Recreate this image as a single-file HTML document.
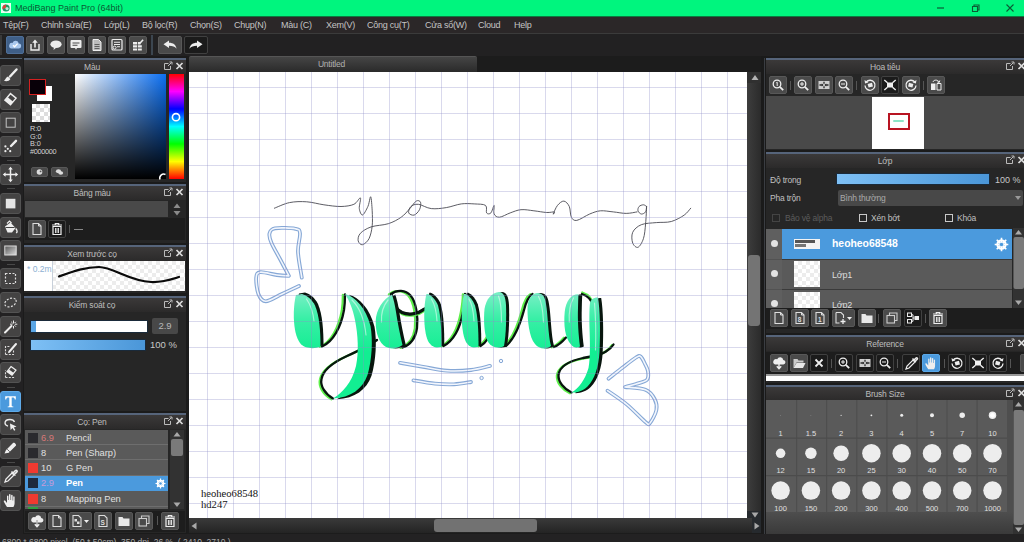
<!DOCTYPE html>
<html>
<head>
<meta charset="utf-8">
<title>MediBang Paint Pro</title>
<style>
*{box-sizing:border-box;margin:0;padding:0}
html,body{width:1024px;height:542px;overflow:hidden;background:#232323;font-family:"Liberation Sans",sans-serif;}
#app{position:relative;width:1024px;height:542px;overflow:hidden;background:#232323;}
.a{position:absolute}
#title{left:0;top:0;width:1024px;height:17px;background:#00f57e;border-bottom:1px solid #0a7a40}
#title .t{position:absolute;left:15px;top:3px;font-size:9px;line-height:10px;color:#0b5a34;white-space:nowrap}
#menu{left:0;top:17px;width:1024px;height:17px;background:#2b2728;border-bottom:1px solid #3b3b3b}
#menu span{position:absolute;top:3px;font-size:9px;line-height:10px;color:#c4c4c4;white-space:nowrap;letter-spacing:-0.25px}
#tbar{left:0;top:34px;width:1024px;height:22px;background:#222122}
.b{position:absolute;width:18px;height:18px;background:#4a4a4a;border-radius:2px;border:1px solid #585858}
.b.dk{background:#1b1b1b;border-color:#404040}
.b.bl{background:#4b9add;border-color:#5aa8e8}
.b svg{position:absolute;left:0;top:0;width:16px;height:16px}
.hdr{position:absolute;height:16px;background:linear-gradient(#3b3939,#2b2a2a);border-top:2px solid #56647a;color:#bdbdbd;font-size:8.5px;text-align:center;line-height:15px;letter-spacing:-0.2px}
.hdr i{position:absolute;top:3px;width:8px;height:8px}
.sep{position:absolute;width:1px;background:#4a4a4a}
.tool{position:absolute;left:0;width:21px;height:21px;background:#444343;border-radius:3px;border:1px solid #535353}
.tool svg{position:absolute;left:1px;top:1px;width:17px;height:17px}
.lbl{position:absolute;color:#c0c0c0;font-size:8.5px;line-height:10px;white-space:nowrap;letter-spacing:-0.2px}
.chk{background-color:#fff;background-image:linear-gradient(45deg,#ddd 25%,transparent 25%,transparent 75%,#ddd 75%),linear-gradient(45deg,#ddd 25%,transparent 25%,transparent 75%,#ddd 75%);background-size:6px 6px;background-position:0 0,3px 3px}
</style>
</head>
<body>
<div id="app">
<div id="title" class="a">
<svg class="a" style="left:1px;top:3px" width="10" height="10" viewBox="0 0 10 10"><rect x="0" y="0" width="10" height="10" fill="#e8fff2"/><circle cx="5" cy="5" r="3.6" fill="#1a9a66"/><path d="M5 1.4A3.6 3.6 0 0 0 1.6 6L5 5Z" fill="#d8443a"/><circle cx="6" cy="5.6" r="1.6" fill="#bfeeda"/></svg>
<span class="t">MediBang Paint Pro (64bit)</span>
<svg class="a" style="left:934px;top:3px" width="80" height="11" viewBox="0 0 80 11"><path d="M3 5h7" stroke="#0b5a34" stroke-width="1.2" fill="none"/><path d="M38.5 3.5h5v5h-5zM40 3.5v-1.5h5v5h-1.5" stroke="#0b5a34" stroke-width="1.1" fill="none"/><path d="M72.5 1.5l7 7M79.5 1.5l-7 7" stroke="#0b5a34" stroke-width="1.1" fill="none"/></svg>
</div>
<div id="menu" class="a">
<span style="left:3px">Tệp(F)</span><span style="left:41px">Chỉnh sửa(E)</span><span style="left:104px">Lớp(L)</span><span style="left:142px">Bộ lọc(R)</span><span style="left:190px">Chọn(S)</span><span style="left:234px">Chụp(N)</span><span style="left:281px">Màu (C)</span><span style="left:326px">Xem(V)</span><span style="left:367px">Công cụ(T)</span><span style="left:425px">Cửa sổ(W)</span><span style="left:478px">Cloud</span><span style="left:514px">Help</span>
</div>
<div id="tbar" class="a"></div>
<div class="a" style="left:0;top:35px;width:2px;height:20px;background:#3a3a3a"></div>
<!-- toolbar buttons -->
<div class="b" style="left:6px;top:36px;background:#3f5f88;border-color:#4f6f98"><svg viewBox="0 0 16 16"><path d="M4.5 11.5h7a2.5 2.5 0 0 0 .3-5 3.3 3.3 0 0 0-6.3-.6A2.8 2.8 0 0 0 4.5 11.5Z" fill="#a9c8ee"/><path d="M6 8.2l1.6 1.6 3-3.2" stroke="#fff" stroke-width="1.3" fill="none"/></svg></div>
<div class="b" style="left:26px;top:36px"><svg viewBox="0 0 16 16"><path d="M4 7v6h8V7" stroke="#eee" stroke-width="1.4" fill="none"/><path d="M8 10.5V4" stroke="#eee" stroke-width="1.6"/><path d="M5.2 5.8L8 2.6l2.8 3.2Z" fill="#eee"/></svg></div>
<div class="b" style="left:47px;top:36px"><svg viewBox="0 0 16 16"><ellipse cx="8" cy="7.2" rx="5.6" ry="3.8" fill="#eee"/><path d="M6 10l-.5 3 3-2.4Z" fill="#eee"/></svg></div>
<div class="b" style="left:67px;top:36px"><svg viewBox="0 0 16 16"><rect x="2.5" y="3" width="11" height="8" rx="1" fill="#eee"/><path d="M7 11l1 1.8 1-1.8Z" fill="#eee"/><path d="M4.5 6h7M4.5 8.2h5" stroke="#4a4a4a" stroke-width="1.1"/></svg></div>
<div class="b" style="left:88px;top:36px"><svg viewBox="0 0 16 16"><path d="M4 2.5h5.5l2.5 2.5v8.5h-8Z" fill="#bbb" stroke="#eee" stroke-width="1"/><path d="M5.5 7.5h5M5.5 9.5h5M5.5 11.5h5" stroke="#555" stroke-width=".9"/></svg></div>
<div class="b" style="left:108px;top:36px"><svg viewBox="0 0 16 16"><rect x="3" y="2.5" width="10" height="10.5" rx="1" fill="none" stroke="#eee" stroke-width="1.2"/><path d="M5 5.2h6M5 7.5h6M8 9.8h3" stroke="#eee" stroke-width="1.1"/><circle cx="5.6" cy="10.6" r="1.5" fill="none" stroke="#eee" stroke-width="1"/></svg></div>
<div class="b" style="left:129px;top:36px"><svg viewBox="0 0 16 16"><path d="M3 5h4v2.4H3zM3 8.2h4v2.4H3zM3 11.4h4v2H3zM7.8 8.2h4v2.4h-4zM7.8 11.4h4v2h-4zM7.8 5h2.6v2.4H7.8z" fill="#eee"/><path d="M9.5 6.8l3.6-4" stroke="#eee" stroke-width="1.5"/></svg></div>
<div class="a" style="left:151px;top:35px;width:2px;height:20px;background:#3c4650"></div>
<div class="b" style="left:158px;top:36px;width:24px"><svg viewBox="0 0 22 16" style="width:22px"><path d="M4.5 7.2L10 3.4v2.3c4.2 0 7 2 7.5 6-1.6-2.2-3.8-2.9-7.5-2.9v2.3Z" fill="#eee"/></svg></div>
<div class="b dk" style="left:184px;top:36px;width:24px"><svg viewBox="0 0 22 16" style="width:22px"><path d="M17.5 7.2L12 3.4v2.3c-4.2 0-7 2-7.5 6 1.6-2.2 3.8-2.9 7.5-2.9v2.3Z" fill="#eee"/></svg></div>
<!-- left tool column -->
<div class="a" style="left:0;top:56px;width:23px;height:478px;background:#222122"></div>
<div class="a" style="left:0;top:58px;width:22px;height:1px;background:#50606f"></div>
<div class="tool" style="top:65px"><svg viewBox="0 0 17 17"><path d="M14.500 2.500L8 9.500" stroke="#eee" stroke-width="2.400" stroke-linecap="round"/><path d="M2 13.800c2.200.9 5.200.4 6.400-1.800l-2.400-2.400C3.800 10 4 12.400 2 13.800Z" fill="#eee"/></svg></div>
<div class="tool" style="top:89px"><svg viewBox="0 0 17 17"><path d="M8.5 2.6l5.6 4.6-5.6 6.6-5.600-4.600Z" fill="none" stroke="#eee" stroke-width="1.4"/><path d="M2.9 9.2l3.4-3.800 5.200 4.400-3 3.600Z" fill="#eee" opacity=".0"/><path d="M3.2 9.200l2.600-3 5.400 4.600-2.700 3Z" fill="#eee"/></svg></div>
<div class="tool" style="top:112px"><svg viewBox="0 0 17 17"><rect x="4.200" y="4.200" width="9" height="9" fill="none" stroke="#c4c4c4" stroke-width="1"/></svg></div>
<div class="tool" style="top:136px"><svg viewBox="0 0 17 17"><path d="M14 2.800L9 8" stroke="#eee" stroke-width="2.400" stroke-linecap="round"/><circle cx="3.400" cy="8.400" r="1.100" fill="#eee"/><circle cx="5.800" cy="10.800" r="1.100" fill="#eee"/><circle cx="8.200" cy="13.200" r="1.100" fill="#eee"/><circle cx="3.400" cy="13.200" r="1.100" fill="#eee"/></svg></div>
<div class="a" style="left:7px;top:160px;width:8px;height:1px;background:#484848"></div>
<div class="tool" style="top:164px"><svg viewBox="0 0 17 17"><path d="M8.500 2v13M2 8.500h13" stroke="#eee" stroke-width="1.500"/><path d="M8.500 .800l2.300 2.800H6.200ZM8.500 16.200l2.300-2.800H6.200ZM.800 8.500l2.800-2.300v4.600ZM16.200 8.500l-2.800-2.300v4.600Z" fill="#eee"/></svg></div>
<div class="a" style="left:7px;top:188px;width:8px;height:1px;background:#484848"></div>
<div class="tool" style="top:193px"><svg viewBox="0 0 17 17"><rect x="3.800" y="3.800" width="9.600" height="9.600" fill="#e4e4e4"/></svg></div>
<div class="tool" style="top:217px"><svg viewBox="0 0 17 17"><path d="M3 7.500l5.500-4 5 5.500-3.500 4.500H5.500Z" fill="#eee"/><path d="M5 4.500l2.500-2.500 2 2" stroke="#eee" stroke-width="1.200" fill="none"/><path d="M13.800 9.500c1.400 1.800 1.600 3.600.4 4.600" stroke="#eee" stroke-width="1.300" fill="none"/><path d="M3.600 8.500h9" stroke="#444" stroke-width="1"/></svg></div>
<div class="tool" style="top:240px"><svg viewBox="0 0 17 17"><defs><linearGradient id="gt" x1="0" y1="0" x2="1" y2="1"><stop offset="0" stop-color="#555"/><stop offset="1" stop-color="#ddd"/></linearGradient></defs><rect x="2.800" y="4" width="11.400" height="9" fill="url(#gt)" stroke="#ddd" stroke-width="1"/></svg></div>
<div class="a" style="left:7px;top:264px;width:8px;height:1px;background:#484848"></div>
<div class="tool" style="top:268px"><svg viewBox="0 0 17 17"><rect x="3.500" y="3.500" width="10" height="10" fill="none" stroke="#ddd" stroke-width="1.200" stroke-dasharray="2 1.500"/></svg></div>
<div class="tool" style="top:292px"><svg viewBox="0 0 17 17"><ellipse cx="8.500" cy="8.500" rx="6" ry="4" fill="none" stroke="#ddd" stroke-width="1.200" stroke-dasharray="2 1.500" transform="rotate(-25 8.500 8.500)"/></svg></div>
<div class="tool" style="top:316px"><svg viewBox="0 0 17 17"><path d="M3 14.500L9.500 8" stroke="#eee" stroke-width="2" stroke-linecap="round"/><path d="M11.500 2.500v3M11.500 8v2.500M8 6.200h2.500M12.800 6.200h2.500M9.200 3.800l1.300 1.300M13.800 3.800l-1.300 1.300M13.800 8.600l-1.300-1.300" stroke="#eee" stroke-width="1"/></svg></div>
<div class="tool" style="top:339px"><svg viewBox="0 0 17 17"><path d="M3.500 13.500v-8h5M3.500 13.500h8v-4" fill="none" stroke="#ddd" stroke-width="1.100" stroke-dasharray="2 1.300"/><path d="M14 3L7.500 10.500" stroke="#eee" stroke-width="2" stroke-linecap="round"/><path d="M5.800 12.300l1-2.400 1.400 1.400Z" fill="#eee"/></svg></div>
<div class="tool" style="top:362px"><svg viewBox="0 0 17 17"><path d="M3.500 13.500v-7M3.500 13.500h9" fill="none" stroke="#ddd" stroke-width="1.100" stroke-dasharray="2 1.300"/><path d="M9 2.600l5 3.600-4 5-5-3.600Z" fill="none" stroke="#eee" stroke-width="1.200"/><path d="M5.200 7.700l1.800-2.200 4.800 3.600-1.800 2.200Z" fill="#eee"/></svg></div>
<div class="a" style="left:7px;top:387px;width:8px;height:1px;background:#484848"></div>
<div class="tool" style="top:391px;background:#4b9add;border-color:#5eaae8"><svg viewBox="0 0 17 17"><path d="M3.200 3.200h10.600v3.200h-1c-.2-1.400-.8-2-2.200-2H9.700v8c0 .8.400 1 1.600 1.100v.8H5.700v-.8c1.200-.1 1.600-.3 1.600-1.100v-8H6.400c-1.400 0-2 .6-2.200 2h-1Z" fill="#fff"/></svg></div>
<div class="tool" style="top:414px"><svg viewBox="0 0 17 17"><path d="M8 3.500c-3 0-5 1.600-5 3.600 0 1.600 1.400 2.600 3 3" fill="none" stroke="#eee" stroke-width="1.300"/><path d="M8 3.500c2.400 0 4 1 4.500 2.500" fill="none" stroke="#eee" stroke-width="1.300"/><path d="M8 7.500l6.500 3-2.700.9 1.600 2.600-1.300.8-1.600-2.700-1.900 1.900Z" fill="#eee"/></svg></div>
<div class="tool" style="top:438px"><svg viewBox="0 0 17 17"><path d="M2.500 13.500l1.500-3.500 7-7c1.200-1.200 4 1.600 2.800 2.800l-7 7Z" fill="#eee"/><path d="M5.200 9.200l2.600 2.600" stroke="#444" stroke-width=".8"/></svg></div>
<div class="a" style="left:7px;top:462px;width:8px;height:1px;background:#484848"></div>
<div class="tool" style="top:466px"><svg viewBox="0 0 17 17"><path d="M3 14l1-3 6-6 2 2-6 6Z" fill="none" stroke="#eee" stroke-width="1.300"/><path d="M9.500 3.500l4 4M11 5l2.500-2.500c.8-.8 2.200.6 1.400 1.400L12.400 6.400" stroke="#eee" stroke-width="1.600" fill="none"/></svg></div>
<div class="tool" style="top:490px"><svg viewBox="0 0 17 17"><path d="M5 15c-1-1.500-2.600-4-3.200-5.600-.3-.9.900-1.400 1.500-.6L5 11V4.200c0-1 1.400-1 1.400 0V8h.6V2.800c0-1 1.500-1 1.500 0V8h.6V3.400c0-1 1.500-1 1.500 0V8.400h.6V5c0-1 1.400-1 1.400 0v6c0 1.800-.6 3-1.200 4Z" fill="#eee"/></svg></div>

<!-- ===== left panels ===== -->
<div class="a" style="left:23px;top:56px;width:164px;height:478px;background:#1b1b1b"></div>
<!-- Mau -->
<div class="a" style="left:24px;top:58px;width:162px;height:124px;background:#262626"></div>
<div class="hdr" style="left:24px;top:58px;width:162px;padding-right:26px">Màu<svg class="a" style="left:139px;top:1px" width="22" height="10" viewBox="0 0 22 10"><path d="M5.500 2.500H1.500v6h6V5" stroke="#bbb" stroke-width="1" fill="none"/><path d="M5 5l3.500-3.500M6.500 1h2.500v2.500" stroke="#bbb" stroke-width="1" fill="none"/><path d="M13.500 2l6 6M19.500 2l-6 6" stroke="#ddd" stroke-width="1.700"/></svg></div>
<div class="a" style="left:37px;top:86px;width:15px;height:15px;background:#fff"></div>
<div class="a" style="left:29px;top:79px;width:17px;height:16px;background:#080008;border:1.500px solid #d42020"></div>
<div class="a chk" style="left:32px;top:104px;width:18px;height:18px;background-size:8px 8px;background-position:0 0,4px 4px"></div>
<div class="lbl" style="left:30px;top:125px;font-size:7.300px;line-height:7.700px;color:#d4d4d4;letter-spacing:-0.100px">R:0<br>G:0<br>B:0<br><span style="letter-spacing:-0.300px">#000000</span></div>
<div class="a" style="left:31px;top:167px;width:17px;height:10px;background:#4a4a4a;border:1px solid #585858;border-radius:2px"><svg width="15" height="8" viewBox="0 0 15 8" class="a" style="left:0;top:0"><circle cx="7.500" cy="4" r="2.800" fill="#ddd"/><circle cx="8.600" cy="3.400" r=".9" fill="#555"/></svg></div>
<div class="a" style="left:51px;top:167px;width:17px;height:10px;background:#4a4a4a;border:1px solid #585858;border-radius:2px"><svg width="15" height="8" viewBox="0 0 15 8" class="a" style="left:0;top:0"><ellipse cx="6.500" cy="3.200" rx="2.600" ry="2" fill="#ddd"/><ellipse cx="8.800" cy="5" rx="2.400" ry="1.800" fill="#ddd"/></svg></div>
<!-- color square -->
<div class="a" style="left:75px;top:74px;width:91px;height:105px;background:linear-gradient(to bottom,rgba(0,0,0,0),#000),linear-gradient(to right,#fff,#0b6ff2)"></div>
<div class="a" style="left:169px;top:74px;width:15px;height:105px;background:linear-gradient(to bottom,#ff0000 0%,#ff00ff 16.600%,#0000ff 33.300%,#00ffff 50%,#00ff00 66.600%,#ffff00 83.300%,#ff0000 100%)"></div>
<svg class="a" style="left:168px;top:110px" width="17" height="15" viewBox="0 0 17 15"><circle cx="8" cy="7.200" r="3.600" fill="none" stroke="#fff" stroke-width="1.600"/></svg>
<svg class="a" style="left:157px;top:170px" width="10" height="10" viewBox="0 0 10 10"><path d="M3 9.500A4 4 0 0 1 8.500 4.500" fill="none" stroke="#fff" stroke-width="1.500"/></svg>
<!-- Bang mau -->
<div class="a" style="left:24px;top:184px;width:162px;height:59px;background:#262626"></div>
<div class="hdr" style="left:24px;top:184px;width:162px;padding-right:26px">Bảng màu<svg class="a" style="left:139px;top:1px" width="22" height="10" viewBox="0 0 22 10"><path d="M5.500 2.500H1.500v6h6V5" stroke="#bbb" stroke-width="1" fill="none"/><path d="M5 5l3.500-3.500M6.500 1h2.500v2.500" stroke="#bbb" stroke-width="1" fill="none"/><path d="M13.500 2l6 6M19.500 2l-6 6" stroke="#ddd" stroke-width="1.700"/></svg></div>
<div class="a" style="left:25px;top:201px;width:143px;height:16px;background:#494949"></div>
<svg class="a" style="left:172px;top:202px" width="10" height="15" viewBox="0 0 10 15"><path d="M5 1.500l3.500 4.500h-7ZM5 13.500l3.500-4.500h-7Z" fill="#8a8a8a"/></svg>
<div class="a" style="left:25px;top:218px;width:160px;height:22px;background:#1d1d1d"></div>
<div class="b" style="left:28px;top:220px"><svg viewBox="0 0 16 16"><path d="M4 2.500h5.500l2.500 2.500v8.500h-8Z" fill="none" stroke="#ddd" stroke-width="1.100"/><path d="M9.500 2.500v2.500h2.500" fill="none" stroke="#ddd" stroke-width="1"/></svg></div>
<div class="b dk" style="left:48px;top:220px"><svg viewBox="0 0 16 16"><path d="M4 5.500h8v8h-8Z" fill="none" stroke="#eee" stroke-width="1.200"/><path d="M3 4h10M6.300 3.800v-1.300h3.400v1.300" stroke="#eee" stroke-width="1.200" fill="none"/><path d="M6.500 7v5M9.500 7v5M8 7v5" stroke="#eee" stroke-width=".9"/></svg></div>
<div class="a" style="left:69px;top:225px;width:1px;height:8px;background:#555"></div>
<div class="a" style="left:74px;top:229px;width:9px;height:1px;background:#888"></div>
<!-- Xem truoc co -->
<div class="a" style="left:24px;top:245px;width:162px;height:48px;background:#262626"></div>
<div class="hdr" style="left:24px;top:245px;width:162px;padding-right:26px">Xem trước cọ<svg class="a" style="left:139px;top:1px" width="22" height="10" viewBox="0 0 22 10"><path d="M5.500 2.500H1.500v6h6V5" stroke="#bbb" stroke-width="1" fill="none"/><path d="M5 5l3.500-3.500M6.500 1h2.500v2.500" stroke="#bbb" stroke-width="1" fill="none"/><path d="M13.500 2l6 6M19.500 2l-6 6" stroke="#ddd" stroke-width="1.700"/></svg></div>
<div class="a chk" style="left:24px;top:261px;width:161px;height:30px;background-size:8px 8px;background-position:0 0,4px 4px;background-image:linear-gradient(45deg,#ececec 25%,transparent 25%,transparent 75%,#ececec 75%),linear-gradient(45deg,#ececec 25%,transparent 25%,transparent 75%,#ececec 75%)"></div>
<div class="a" style="left:24px;top:261px;width:29px;height:30px;background:#fff;border-right:1px solid #c8d0da"></div>
<div class="lbl" style="left:27px;top:264px;font-size:8.500px;color:#8db0d2;width:26px;overflow:hidden;letter-spacing:0">* 0.2m</div>
<svg class="a" style="left:53px;top:261px" width="132" height="30" viewBox="0 0 132 30"><path d="M6 15.500C20 10.500 32 6 46 6s30 14 52 15c12 .5 20-2.500 28-5" fill="none" stroke="#0a0a0a" stroke-width="2.200" stroke-linecap="round"/></svg>
<!-- Kiem soat co -->
<div class="a" style="left:24px;top:296px;width:162px;height:115px;background:#262626"></div>
<div class="hdr" style="left:24px;top:296px;width:162px;padding-right:26px">Kiểm soát cọ<svg class="a" style="left:139px;top:1px" width="22" height="10" viewBox="0 0 22 10"><path d="M5.500 2.500H1.500v6h6V5" stroke="#bbb" stroke-width="1" fill="none"/><path d="M5 5l3.500-3.500M6.500 1h2.500v2.500" stroke="#bbb" stroke-width="1" fill="none"/><path d="M13.500 2l6 6M19.500 2l-6 6" stroke="#ddd" stroke-width="1.700"/></svg></div>
<div class="a" style="left:30px;top:320px;width:118px;height:13px;background:#fff;border:1px solid #1a2a3a"></div>
<div class="a" style="left:31px;top:321px;width:5px;height:11px;background:#5aa6e6"></div>
<div class="a" style="left:152px;top:318px;width:26px;height:16px;background:#484848;border-radius:2px;color:#b8b8b8;font-size:9.500px;line-height:16px;text-align:center">2.9</div>
<div class="a" style="left:30px;top:339px;width:116px;height:12px;background:linear-gradient(to right,#7ec0f5,#4a96d8);border:1px solid #1a2a3a"></div>
<div class="lbl" style="left:150px;top:340px;font-size:9.500px;color:#c8c8c8;letter-spacing:0">100 %</div>
<!-- Co: Pen -->
<div class="a" style="left:24px;top:413px;width:162px;height:120px;background:#262626"></div>
<div class="hdr" style="left:24px;top:413px;width:162px;padding-right:26px">Cọ: Pen<svg class="a" style="left:139px;top:1px" width="22" height="10" viewBox="0 0 22 10"><path d="M5.500 2.500H1.500v6h6V5" stroke="#bbb" stroke-width="1" fill="none"/><path d="M5 5l3.500-3.500M6.500 1h2.500v2.500" stroke="#bbb" stroke-width="1" fill="none"/><path d="M13.500 2l6 6M19.500 2l-6 6" stroke="#ddd" stroke-width="1.700"/></svg></div>
<div class="a" style="left:25px;top:430px;width:143px;height:79px;background:#5a5a5a;overflow:hidden">
 <div class="a" style="left:0;top:0;width:143px;height:15px;border-bottom:1px solid #6e6e6e"></div>
 <div class="a" style="left:0;top:15px;width:143px;height:15px;border-bottom:1px solid #6e6e6e"></div>
 <div class="a" style="left:0;top:30px;width:143px;height:16px;border-bottom:1px solid #6e6e6e"></div>
 <div class="a" style="left:0;top:46px;width:143px;height:15px;background:#4b9add"></div>
 <div class="a" style="left:0;top:61px;width:143px;height:16px;border-bottom:1px solid #6e6e6e"></div>
 <div class="a" style="left:3px;top:3px;width:10px;height:10px;background:#2a2a2e"></div>
 <div class="a" style="left:3px;top:18px;width:10px;height:10px;background:#2a2a2e"></div>
 <div class="a" style="left:3px;top:33px;width:10px;height:10px;background:#f03a30"></div>
 <div class="a" style="left:3px;top:48px;width:10px;height:10px;background:#1e2a3c"></div>
 <div class="a" style="left:3px;top:64px;width:10px;height:10px;background:#f03a30"></div>
 <div class="a" style="left:3px;top:77px;width:10px;height:3px;background:#30a040"></div>
 <div class="lbl" style="left:16px;top:3px;font-size:9.300px;letter-spacing:0;color:#d87878">6.9</div><div class="lbl" style="left:41px;top:3px;font-size:9.300px;letter-spacing:0;color:#e0e0e0">Pencil</div>
 <div class="lbl" style="left:16px;top:18px;font-size:9.300px;letter-spacing:0;color:#e0e0e0">8</div><div class="lbl" style="left:41px;top:18px;font-size:9.300px;letter-spacing:0;color:#e0e0e0">Pen (Sharp)</div>
 <div class="lbl" style="left:16px;top:33px;font-size:9.300px;letter-spacing:0;color:#e0e0e0">10</div><div class="lbl" style="left:41px;top:33px;font-size:9.300px;letter-spacing:0;color:#e0e0e0">G Pen</div>
 <div class="lbl" style="left:16px;top:48px;font-size:9.300px;letter-spacing:0;color:#c89ad8">2.9</div><div class="lbl" style="left:41px;top:48px;font-size:9.300px;letter-spacing:0;color:#fff;font-weight:bold">Pen</div>
 <div class="lbl" style="left:16px;top:64px;font-size:9.300px;letter-spacing:0;color:#e0e0e0">8</div><div class="lbl" style="left:41px;top:64px;font-size:9.300px;letter-spacing:0;color:#e0e0e0">Mapping Pen</div>
 <svg class="a" style="left:130px;top:48px" width="11" height="11" viewBox="0 0 11 11"><circle cx="5.500" cy="5.500" r="3" fill="none" stroke="#fff" stroke-width="1.600"/><path d="M5.500 .500v10M.500 5.500h10M2 2l7 7M9 2l-7 7" stroke="#fff" stroke-width="1.200"/><circle cx="5.500" cy="5.500" r="1.300" fill="#4b9add"/></svg>
</div>
<div class="a" style="left:170px;top:430px;width:14px;height:79px;background:#323232"></div>
<svg class="a" style="left:170px;top:430px" width="14" height="79" viewBox="0 0 14 79"><path d="M7 2l3.500 4.500h-7Z" fill="#aaa"/><rect x="1" y="9" width="12" height="17" rx="2" fill="#7a7a7a"/><path d="M7 77l3.500-4.500h-7Z" fill="#aaa"/></svg>
<div class="a" style="left:25px;top:511px;width:160px;height:21px;background:#1d1d1d"></div>
<div class="b" style="left:28px;top:512px"><svg viewBox="0 0 16 16"><path d="M4 9.500h8a2.300 2.300 0 0 0 .3-4.600 3.200 3.200 0 0 0-6.100-.6A2.600 2.600 0 0 0 4 9.500Z" fill="#eee"/><path d="M8 7v6.500M5.800 11.300l2.200 2.400 2.200-2.400" stroke="#eee" stroke-width="1.400" fill="none"/><path d="M8 7v4" stroke="#4a4a4a" stroke-width=".6"/></svg></div>
<div class="b" style="left:48px;top:512px"><svg viewBox="0 0 16 16"><path d="M4 2.500h5.500l2.500 2.500v8.500h-8Z" fill="none" stroke="#ddd" stroke-width="1.100"/><path d="M9.500 2.500v2.500h2.500" fill="none" stroke="#ddd" stroke-width="1"/></svg></div>
<div class="b" style="left:69px;top:512px;width:23px"><svg viewBox="0 0 21 16" style="width:21px"><path d="M3 2.500h5.500l2.500 2.500v8.500h-8Z" fill="none" stroke="#ddd" stroke-width="1.100"/><rect x="4.500" y="6" width="2.500" height="2.500" fill="#ddd"/><rect x="7" y="8.500" width="2.500" height="2.500" fill="#ddd"/><path d="M14 7h5l-2.500 3Z" fill="#eee"/></svg></div>
<div class="b" style="left:94px;top:512px"><svg viewBox="0 0 16 16"><path d="M4 2.500h5.500l2.500 2.500v8.500h-8Z" fill="none" stroke="#ddd" stroke-width="1.100"/><text x="5.500" y="11.500" font-size="6.500" fill="#ddd" font-family="Liberation Sans" font-weight="bold">S</text></svg></div>
<div class="b" style="left:115px;top:512px"><svg viewBox="0 0 16 16"><path d="M2.500 4h4l1 1.500h6v7.500h-11Z" fill="#e8e8e8"/></svg></div>
<div class="b" style="left:135px;top:512px"><svg viewBox="0 0 16 16"><rect x="3" y="5.500" width="7.500" height="7.500" fill="none" stroke="#ccc" stroke-width="1.100"/><path d="M5.500 5.500v-2.500h7.500v7.500h-2.500" fill="none" stroke="#ccc" stroke-width="1.100"/></svg></div>
<div class="a" style="left:157px;top:516px;width:1px;height:9px;background:#555"></div>
<div class="b" style="left:161px;top:512px"><svg viewBox="0 0 16 16"><path d="M4 5.500h8v8h-8Z" fill="none" stroke="#eee" stroke-width="1.200"/><path d="M3 4h10M6.300 3.800v-1.300h3.400v1.300" stroke="#eee" stroke-width="1.200" fill="none"/><path d="M6.500 7v5M9.500 7v5M8 7v5" stroke="#eee" stroke-width=".9"/></svg></div>
<!-- ===== canvas area ===== -->
<div class="a" style="left:187px;top:56px;width:579px;height:478px;background:#1c1c1c"></div>
<div class="a" style="left:189px;top:56px;width:288px;height:16px;background:linear-gradient(#454545,#2a2a2a);border-top:1px solid #555;border-radius:2px 2px 0 0;color:#b0b0b0;font-size:8.500px;line-height:15px;text-align:center;letter-spacing:-0.200px;padding-right:3px">Untitled</div>
<div class="a" id="canvas" style="left:189px;top:72px;width:558px;height:446px;background-color:#fff"></div>
<!-- v scrollbar -->
<div class="a" style="left:747px;top:72px;width:14px;height:446px;background:linear-gradient(to right,#3d3d3d,#2b2b2b)"></div>
<div class="a" style="left:747px;top:72px;width:14px;height:11px;background:#303030"></div>
<div class="a" style="left:747px;top:511px;width:14px;height:8px;background:#262a2e"></div>
<div class="a" style="left:748px;top:255px;width:12px;height:71px;background:#747474;border-radius:3px"></div>
<svg class="a" style="left:751px;top:74px" width="8" height="7" viewBox="0 0 8 7"><path d="M4 1l3.500 5H.5Z" fill="#b4b4b4"/></svg>
<svg class="a" style="left:751px;top:512px" width="8" height="6" viewBox="0 0 8 6"><path d="M4 5.500l3.500-5H.5Z" fill="#a8a8a8"/></svg>
<!-- h scrollbar -->
<div class="a" style="left:189px;top:518px;width:563px;height:15px;background:linear-gradient(#3a3a3a,#242424)"></div>
<div class="a" style="left:752px;top:518px;width:9px;height:15px;background:#262a2e"></div>
<div class="a" style="left:434px;top:519px;width:103px;height:13px;background:#727272;border-radius:3px"></div>
<svg class="a" style="left:191px;top:522px" width="6" height="8" viewBox="0 0 6 8"><path d="M.5 4l5-3.500v7Z" fill="#a8a8a8"/></svg>
<svg class="a" style="left:754px;top:522px" width="6" height="8" viewBox="0 0 6 8"><path d="M5.500 4L.5.500v7Z" fill="#a8a8a8"/></svg>
<div class="a" style="left:761px;top:56px;width:5px;height:478px;background:#1a1a1a"></div>
<div class="a" style="left:764px;top:58px;width:1px;height:476px;background:#3a3d42"></div>
<div class="a" style="left:201px;top:488px;font-family:'Liberation Serif',serif;font-size:10.600px;line-height:11px;color:#111;white-space:nowrap">heoheo68548<br>hd247</div>
<!-- artwork -->
<svg class="a" style="left:189px;top:72px" width="558" height="446" viewBox="189 72 558 446">
<defs>
<linearGradient id="mint" gradientUnits="userSpaceOnUse" x1="0" y1="292" x2="0" y2="352"><stop offset="0" stop-color="#7aefc6"/><stop offset=".45" stop-color="#38efa6"/><stop offset="1" stop-color="#12ee92"/></linearGradient>
</defs>
<!--ART-->
<path d="M274.4,208.2C276.9,207.3 284.1,203.7 289.5,202.6C294.9,201.5 301.0,201.4 306.7,201.8C312.4,202.2 318.2,204.0 323.9,204.8C329.6,205.6 336.0,206.6 341.0,206.5C346.0,206.4 350.7,205.7 353.9,204.3C357.1,202.9 359.5,197.2 360.4,197.9C361.3,198.6 358.9,205.8 359.3,208.6C359.7,211.4 361.1,215.3 362.5,215.0C363.9,214.7 366.5,209.5 367.9,206.5C369.3,203.5 370.0,196.1 370.7,196.8C371.4,197.5 371.9,206.0 372.2,210.8C372.4,215.6 372.7,221.2 372.2,225.8C371.7,230.5 370.6,235.5 369.0,238.7C367.4,241.8 364.3,244.3 362.5,244.7C360.7,245.1 358.6,242.8 358.2,240.9C357.8,239.0 358.2,235.6 360.4,233.3C362.5,231.0 366.5,228.5 371.1,226.9C375.8,225.3 383.3,225.3 388.3,223.7C393.3,222.1 397.6,219.7 401.2,217.2C404.8,214.7 407.3,211.3 409.8,208.6C412.3,205.9 414.4,202.2 416.2,201.1C418.0,200.0 419.9,200.8 420.5,202.2C421.1,203.6 420.6,207.5 419.5,209.7C418.4,211.8 415.9,214.6 414.1,215.1C412.3,215.6 409.2,214.3 408.7,212.9C408.2,211.5 409.3,207.9 410.9,206.5C412.5,205.1 415.0,204.0 418.4,204.3C421.8,204.7 426.6,208.1 431.3,208.6C436.0,209.1 441.3,208.4 446.3,207.6C451.3,206.8 456.7,204.5 461.3,203.9C465.9,203.3 470.2,203.7 474.2,203.9C478.2,204.2 483.4,203.9 485.5,205.4C487.6,206.9 485.7,211.7 486.6,212.9C487.5,214.2 489.6,214.2 490.9,212.9C492.1,211.7 493.6,205.2 494.1,205.4C494.6,205.6 493.2,212.0 494.1,214.0C495.0,216.0 496.8,217.4 499.5,217.2C502.2,217.0 506.6,214.2 510.2,212.9C513.8,211.7 517.0,210.0 521.0,209.7C525.0,209.3 529.6,210.3 533.9,210.8C538.2,211.3 543.3,212.3 546.7,212.5C550.1,212.7 553.2,211.7 554.3,211.9C555.4,212.2 552.7,215.1 553.2,214.0C553.7,212.9 555.7,207.6 557.5,205.4C559.3,203.2 561.9,200.9 563.9,201.1C565.9,201.3 568.0,203.8 569.3,206.5C570.5,209.2 570.1,214.9 571.4,217.2C572.6,219.5 573.8,220.9 576.8,220.4C579.8,219.9 585.8,215.6 589.7,214.0C593.6,212.4 596.5,211.2 600.4,210.8C604.3,210.5 609.0,211.5 613.3,211.9C617.6,212.3 622.2,213.4 626.2,213.4C630.2,213.4 635.2,212.2 637.0,211.9" fill="none" stroke="#4a4a52" stroke-width="0.9" stroke-linecap="round"/>
<path d="M646.6,206.5C646.1,206.2 644.6,204.8 643.4,204.8C642.1,204.8 640.0,205.5 639.1,206.5C638.2,207.5 637.6,209.6 638.0,210.8C638.4,212.1 640.0,213.8 641.3,214.0C642.6,214.2 644.7,213.2 645.6,211.9C646.5,210.7 646.6,204.5 646.6,206.5C646.6,208.5 646.1,218.3 645.6,223.7C645.1,229.1 644.7,234.8 643.4,238.7C642.1,242.6 639.8,246.6 638.0,247.3C636.2,248.0 633.6,245.5 632.7,243.0C631.8,240.5 631.3,235.4 632.7,232.3C634.1,229.2 637.4,226.3 641.3,224.7C645.2,223.1 651.3,223.1 656.3,222.6C661.3,222.1 666.6,222.8 671.3,221.5C675.9,220.2 681.0,217.3 684.2,215.1C687.4,212.9 689.6,209.3 690.7,208.2" fill="none" stroke="#4a4a52" stroke-width="0.9" stroke-linecap="round"/>
<path d="M301.8,277.7C301.2,273.4 298.3,259.4 298.0,252.0C297.7,244.6 300.4,237.4 300.0,233.5C299.6,229.6 299.6,229.7 295.4,228.8C291.2,227.9 279.3,227.5 275.0,228.3C270.7,229.1 270.1,231.1 269.5,233.5C268.9,235.9 269.6,238.4 271.4,242.7C273.1,246.9 277.1,253.5 280.0,259.0C282.9,264.5 287.4,273.1 288.9,275.9 L288.9,275.9C286.9,275.8 281.7,275.6 276.9,275.0C272.1,274.4 263.8,271.8 260.3,272.2C256.9,272.6 256.5,274.0 256.2,277.7C255.9,281.4 256.9,290.4 258.5,294.3C260.1,298.2 261.9,301.4 265.8,301.3C269.7,301.2 276.5,296.6 282.0,294.0C287.5,291.4 296.2,287.3 299.0,286.0" fill="none" stroke="#86a8d6" stroke-width="3.800" stroke-linecap="round" stroke-linejoin="round"/><path d="M301.8,277.7C301.2,273.4 298.3,259.4 298.0,252.0C297.7,244.6 300.4,237.4 300.0,233.5C299.6,229.6 299.6,229.7 295.4,228.8C291.2,227.9 279.3,227.5 275.0,228.3C270.7,229.1 270.1,231.1 269.5,233.5C268.9,235.9 269.6,238.4 271.4,242.7C273.1,246.9 277.1,253.5 280.0,259.0C282.9,264.5 287.4,273.1 288.9,275.9 L288.9,275.9C286.9,275.8 281.7,275.6 276.9,275.0C272.1,274.4 263.8,271.8 260.3,272.2C256.9,272.6 256.5,274.0 256.2,277.7C255.9,281.4 256.9,290.4 258.5,294.3C260.1,298.2 261.9,301.4 265.8,301.3C269.7,301.2 276.5,296.6 282.0,294.0C287.5,291.4 296.2,287.3 299.0,286.0" fill="none" stroke="#f2f6fd" stroke-width="1.600" stroke-linecap="round" stroke-linejoin="round"/>
<path d="M608.5,378.7C610.8,376.9 617.4,371.5 622.0,368.0C626.6,364.5 632.9,359.4 636.0,357.5C639.1,355.6 639.2,355.5 640.7,356.6C642.2,357.7 643.8,361.5 645.0,364.0C646.2,366.5 647.7,368.8 648.0,371.4C648.3,374.0 649.0,377.6 647.0,379.7C645.0,381.8 639.7,382.8 636.0,384.0C632.3,385.2 626.8,386.5 625.0,387.0 L625.0,387.0C628.4,387.5 640.5,387.8 645.4,389.8C650.3,391.8 652.8,395.6 654.6,399.0C656.4,402.4 657.2,406.0 656.4,410.0C655.6,414.0 651.8,421.0 650.0,423.0C648.2,425.0 649.2,425.1 645.4,422.0C641.6,418.9 633.3,409.8 627.0,404.6C620.7,399.4 610.8,393.0 607.5,390.7" fill="none" stroke="#86a8d6" stroke-width="3.800" stroke-linecap="round" stroke-linejoin="round"/><path d="M608.5,378.7C610.8,376.9 617.4,371.5 622.0,368.0C626.6,364.5 632.9,359.4 636.0,357.5C639.1,355.6 639.2,355.5 640.7,356.6C642.2,357.7 643.8,361.5 645.0,364.0C646.2,366.5 647.7,368.8 648.0,371.4C648.3,374.0 649.0,377.6 647.0,379.7C645.0,381.8 639.7,382.8 636.0,384.0C632.3,385.2 626.8,386.5 625.0,387.0 L625.0,387.0C628.4,387.5 640.5,387.8 645.4,389.8C650.3,391.8 652.8,395.6 654.6,399.0C656.4,402.4 657.2,406.0 656.4,410.0C655.6,414.0 651.8,421.0 650.0,423.0C648.2,425.0 649.2,425.1 645.4,422.0C641.6,418.9 633.3,409.8 627.0,404.6C620.7,399.4 610.8,393.0 607.5,390.7" fill="none" stroke="#f2f6fd" stroke-width="1.600" stroke-linecap="round" stroke-linejoin="round"/>
<path d="M400.0,362.8C403.8,363.5 415.2,365.5 423.0,366.8C430.8,368.1 439.0,370.2 447.0,370.7C455.0,371.2 463.8,370.8 471.0,370.0C478.2,369.2 486.8,366.6 490.0,365.9" fill="none" stroke="#86a8d6" stroke-width="3.800" stroke-linecap="round" stroke-linejoin="round"/><path d="M400.0,362.8C403.8,363.5 415.2,365.5 423.0,366.8C430.8,368.1 439.0,370.2 447.0,370.7C455.0,371.2 463.8,370.8 471.0,370.0C478.2,369.2 486.8,366.6 490.0,365.9" fill="none" stroke="#f2f6fd" stroke-width="1.600" stroke-linecap="round" stroke-linejoin="round"/>
<path d="M413.4,380.3C417.0,380.9 428.2,382.9 435.0,383.6C441.8,384.3 448.0,384.6 454.0,384.3C460.0,384.0 468.2,382.4 471.0,382.0" fill="none" stroke="#86a8d6" stroke-width="3.800" stroke-linecap="round" stroke-linejoin="round"/><path d="M413.4,380.3C417.0,380.9 428.2,382.9 435.0,383.6C441.8,384.3 448.0,384.6 454.0,384.3C460.0,384.0 468.2,382.4 471.0,382.0" fill="none" stroke="#f2f6fd" stroke-width="1.600" stroke-linecap="round" stroke-linejoin="round"/>
<circle cx="501" cy="361" r="1.700" fill="#f2f6fd" stroke="#86a8d6" stroke-width="1"/><circle cx="481.600" cy="378" r="1.700" fill="#f2f6fd" stroke="#86a8d6" stroke-width="1"/>
<path d="M322,346.500 C333,342 341,327 344,310 C345,303 345,298 345,294.500" fill="none" stroke="#5df04a" stroke-width="2.300" stroke-linecap="round" transform="translate(-2.1,0.3)"/><path d="M322,346.500 C333,342 341,327 344,310 C345,303 345,298 345,294.500" fill="none" stroke="#08160e" stroke-width="2.300" stroke-linecap="round"/>
<path d="M333,398.500 C325,394 320,386 321.500,379 C323,370 334,362 347,356 C358,351 369,346 377,340" fill="none" stroke="#5df04a" stroke-width="2.300" stroke-linecap="round" transform="translate(-1.6,0.8)"/><path d="M333,398.500 C325,394 320,386 321.500,379 C323,370 334,362 347,356 C358,351 369,346 377,340" fill="none" stroke="#08160e" stroke-width="2.300" stroke-linecap="round"/>
<path d="M391,294 C397,289.500 405.500,289.800 410.500,295.500 C416,302 418.300,316 417,328 C415.500,338 410,345 402.500,347.500" fill="none" stroke="#5df04a" stroke-width="2.300" stroke-linecap="round" transform="translate(-2.1,0.3)"/><path d="M391,294 C397,289.500 405.500,289.800 410.500,295.500 C416,302 418.300,316 417,328 C415.500,338 410,345 402.500,347.500" fill="none" stroke="#08160e" stroke-width="2.300" stroke-linecap="round"/>
<path d="M391.500,295 C392.500,302 396,309.500 402,312.500 C409,315.500 418,314 424.500,309" fill="none" stroke="#5df04a" stroke-width="2.300" stroke-linecap="round" transform="translate(0.3,1.6)"/><path d="M391.500,295 C392.500,302 396,309.500 402,312.500 C409,315.500 418,314 424.500,309" fill="none" stroke="#08160e" stroke-width="2.300" stroke-linecap="round"/>
<path d="M391.500,295 C392.500,302 396,309.500 402,312.500 C409,315.500 418,314 424.500,309" fill="none" stroke="#08160e" stroke-width="3.200" stroke-linecap="round"/>
<path d="M443.500,346 C453,341 460,328 463,312 C464.500,304 465,298 465,294" fill="none" stroke="#5df04a" stroke-width="2.300" stroke-linecap="round" transform="translate(-2.1,0.3)"/><path d="M443.500,346 C453,341 460,328 463,312 C464.500,304 465,298 465,294" fill="none" stroke="#08160e" stroke-width="2.300" stroke-linecap="round"/>
<path d="M480.500,346 C487,342 491,334 493,326" fill="none" stroke="#5df04a" stroke-width="2.300" stroke-linecap="round" transform="translate(-2.1,0.3)"/><path d="M480.500,346 C487,342 491,334 493,326" fill="none" stroke="#08160e" stroke-width="2.300" stroke-linecap="round"/>
<path d="M506,346 C514,339 520,325 524,310 C526,302 529,296 532.500,294" fill="none" stroke="#5df04a" stroke-width="2.300" stroke-linecap="round" transform="translate(-2.1,0.3)"/><path d="M506,346 C514,339 520,325 524,310 C526,302 529,296 532.500,294" fill="none" stroke="#08160e" stroke-width="2.300" stroke-linecap="round"/>
<path d="M554,347 C559,345 563,341 566,337.500" fill="none" stroke="#5df04a" stroke-width="2.300" stroke-linecap="round" transform="translate(-2.1,0.3)"/><path d="M554,347 C559,345 563,341 566,337.500" fill="none" stroke="#08160e" stroke-width="2.300" stroke-linecap="round"/>
<path d="M582,294 C588,296 592,301 593,306" fill="none" stroke="#5df04a" stroke-width="2.300" stroke-linecap="round" transform="translate(0.3,-1.5)"/><path d="M582,294 C588,296 592,301 593,306" fill="none" stroke="#08160e" stroke-width="2.300" stroke-linecap="round"/>
<path d="M571.500,392.500 C564,389 558,382 558.500,375 C559.500,366 569,361 583,358 C592,356.500 601,355 606,351.500 C610,349 612,347 613.500,344.500" fill="none" stroke="#5df04a" stroke-width="2.300" stroke-linecap="round" transform="translate(-1.6,0.8)"/><path d="M571.500,392.500 C564,389 558,382 558.500,375 C559.500,366 569,361 583,358 C592,356.500 601,355 606,351.500 C610,349 612,347 613.500,344.500" fill="none" stroke="#08160e" stroke-width="2.300" stroke-linecap="round"/>
<path d="M296,295 C293,306 292,332 300,343 C304,348.500 314,349.500 320.500,346.500 C320.500,332 319.500,316 315,305.500 C312,299.500 307,295.500 302,294 Z" fill="#08160e" transform="translate(3,-1.5)"/><path d="M296,295 C293,306 292,332 300,343 C304,348.500 314,349.500 320.500,346.500 C320.500,332 319.500,316 315,305.500 C312,299.500 307,295.500 302,294 Z" fill="url(#mint)"/><path d="M306.500,299 C310,304 313,312 314,321" fill="none" stroke="#ffffff" stroke-opacity=".5" stroke-width="1.200" stroke-linecap="round"/>
<path d="M345,294 C355,296.500 366,308 370.500,326 C373,340 372,360 367.500,375 C362.500,389 351,397.500 333,398.500 C342,393 352,383 356,366 C359,352 358,335 355,320 C353,309 349,300 345,294 Z" fill="#08160e" transform="translate(4,0.8)"/><path d="M345,294 C355,296.500 366,308 370.500,326 C373,340 372,360 367.500,375 C362.500,389 351,397.500 333,398.500 C342,393 352,383 356,366 C359,352 358,335 355,320 C353,309 349,300 345,294 Z" fill="url(#mint)"/><path d="M352,300 C360,308 364.500,320 366,335" fill="none" stroke="#ffffff" stroke-opacity=".5" stroke-width="1.200" stroke-linecap="round"/>
<path d="M392,294.500 C383,299 376,310 375.700,321 C375.500,333 379,343 386,347 C391,349.500 398,348.500 402.500,345 C400,335 397.500,322 396,312 C395,305 393.500,299 392,294.500 Z" fill="#08160e" transform="translate(3.3,0)"/><path d="M392,294.500 C383,299 376,310 375.700,321 C375.500,333 379,343 386,347 C391,349.500 398,348.500 402.500,345 C400,335 397.500,322 396,312 C395,305 393.500,299 392,294.500 Z" fill="url(#mint)"/><path d="M388,300 C383,306 381,314 381.500,322" fill="none" stroke="#ffffff" stroke-opacity=".5" stroke-width="1.200" stroke-linecap="round"/>
<path d="M426.500,294 C423.500,305 423,330 428,341 C432,348 438,348.500 441.500,346.500 C441.500,332 441,316 438,305.500 C436,300 432,296 428,294 Z" fill="#08160e" transform="translate(2.8,-1.2)"/><path d="M426.500,294 C423.500,305 423,330 428,341 C432,348 438,348.500 441.500,346.500 C441.500,332 441,316 438,305.500 C436,300 432,296 428,294 Z" fill="url(#mint)"/><path d="M431.500,299 C434.500,304 436.500,312 437,321" fill="none" stroke="#ffffff" stroke-opacity=".5" stroke-width="1.200" stroke-linecap="round"/>
<path d="M464,294 C461,305 460.500,330 465.500,341 C469,348 475,348.500 478.500,346.500 C478.500,332 478,316 475,305.500 C473,300 469.500,296 465.500,294 Z" fill="#08160e" transform="translate(2.8,-1.2)"/><path d="M464,294 C461,305 460.500,330 465.500,341 C469,348 475,348.500 478.500,346.500 C478.500,332 478,316 475,305.500 C473,300 469.500,296 465.500,294 Z" fill="url(#mint)"/><path d="M469,299 C472,304 473.500,312 474,321" fill="none" stroke="#ffffff" stroke-opacity=".5" stroke-width="1.200" stroke-linecap="round"/>
<path d="M484.500,309 C486,299 492,292.500 499,292 C503.500,292 505.500,297 506,305 C506.500,318 506,335 504,346 C499,349 492,348 488,342 C484,335 483.500,320 484.500,309 Z" fill="#08160e" transform="translate(3,0)"/><path d="M484.500,309 C486,299 492,292.500 499,292 C503.500,292 505.500,297 506,305 C506.500,318 506,335 504,346 C499,349 492,348 488,342 C484,335 483.500,320 484.500,309 Z" fill="url(#mint)"/><path d="M498.500,296 C501,302 501.500,312 501.500,322" fill="none" stroke="#ffffff" stroke-opacity=".5" stroke-width="1.200" stroke-linecap="round"/>
<path d="M527.500,309 C527.500,300 531,293.500 537,293 C542,292.800 545,296 546,304 C548,315 548,335 551,346 C547,349.500 539,349.500 535,344 C529,337 527.500,320 527.500,309 Z" fill="#08160e" transform="translate(3,0)"/><path d="M527.500,309 C527.500,300 531,293.500 537,293 C542,292.800 545,296 546,304 C548,315 548,335 551,346 C547,349.500 539,349.500 535,344 C529,337 527.500,320 527.500,309 Z" fill="url(#mint)"/><path d="M538.500,296.500 C542,302 543,312 543.500,322" fill="none" stroke="#ffffff" stroke-opacity=".5" stroke-width="1.200" stroke-linecap="round"/>
<path d="M578,294.300 C571,294.500 566,301 564.700,312 C563.500,325 565,338 571,344.500 C574,348 577.500,348.500 580,346.500 C578.500,335 577.500,320 578,308 C578.200,302 578.200,298 578.500,294.500 Z" fill="#08160e" transform="translate(3.8,0)"/><path d="M578,294.300 C571,294.500 566,301 564.700,312 C563.500,325 565,338 571,344.500 C574,348 577.500,348.500 580,346.500 C578.500,335 577.500,320 578,308 C578.200,302 578.200,298 578.500,294.500 Z" fill="url(#mint)"/><path d="M573.500,298 C570,304 568.800,313 569.300,322" fill="none" stroke="#ffffff" stroke-opacity=".5" stroke-width="1.200" stroke-linecap="round"/>
<path d="M598,297.500 C600,310 600.500,330 599.500,352 C598.500,367 595,379 587.500,386.500 C583,391 577,392.800 571.500,392.500 C579,388 585,380 588.500,368 C590.500,358 590,340 589.500,328 C589.300,318 589.300,308 590,303 C591,299 594,297.500 598,297.500 Z" fill="#08160e" transform="translate(3.2,0.6)"/><path d="M598,297.500 C600,310 600.500,330 599.500,352 C598.500,367 595,379 587.500,386.500 C583,391 577,392.800 571.500,392.500 C579,388 585,380 588.500,368 C590.500,358 590,340 589.500,328 C589.300,318 589.300,308 590,303 C591,299 594,297.500 598,297.500 Z" fill="url(#mint)"/><path d="M594.500,303 C595.500,315 596,335 595.500,350" fill="none" stroke="#ffffff" stroke-opacity=".5" stroke-width="1.200" stroke-linecap="round"/>
<!--/ART-->
</svg>
<div class="a" id="grid" style="left:189px;top:72px;width:558px;height:446px;background-image:linear-gradient(to right,rgba(140,140,200,.33) 1px,transparent 1px),linear-gradient(to bottom,rgba(140,140,200,.33) 1px,transparent 1px);background-size:26px 26px;background-position:18px 15px"></div>

<!-- ===== right panels ===== -->
<div class="a" style="left:766px;top:56px;width:258px;height:478px;background:#1b1b1b"></div>
<div class="a" style="left:766px;top:58px;width:258px;height:92px;background:#262626"></div>
<div class="hdr" style="left:766px;top:58px;width:258px;padding-right:20px">Hoa tiêu<svg class="a" style="left:239px;top:1px" width="22" height="10" viewBox="0 0 22 10"><path d="M5.500 2.500H1.500v6h6V5" stroke="#bbb" stroke-width="1" fill="none"/><path d="M5 5l3.500-3.500M6.500 1h2.500v2.500" stroke="#bbb" stroke-width="1" fill="none"/><path d="M13.500 2l6 6M19.500 2l-6 6" stroke="#ddd" stroke-width="1.700"/></svg></div>
<div class="b" style="left:769px;top:76px"><svg viewBox="0 0 16 16"><circle cx="7" cy="7" r="3.800" fill="none" stroke="#eee" stroke-width="1.300"/><path d="M9.800 9.800l3.400 3.400" stroke="#eee" stroke-width="1.800"/><path d="M6.300 5.800l.9-.6v3.800" stroke="#eee" stroke-width="1" fill="none"/></svg></div>
<div class="a" style="left:790px;top:81px;width:1px;height:9px;background:#555"></div>
<div class="b" style="left:794px;top:76px"><svg viewBox="0 0 16 16"><circle cx="7" cy="7" r="3.800" fill="none" stroke="#eee" stroke-width="1.300"/><path d="M9.800 9.800l3.400 3.400" stroke="#eee" stroke-width="1.800"/><path d="M5 7h4M7 5v4" stroke="#eee" stroke-width="1"/></svg></div>
<div class="b" style="left:815px;top:76px"><svg viewBox="0 0 16 16"><rect x="2.500" y="4" width="11" height="8" fill="#cfcfcf"/><path d="M3.500 8h3M12.500 8h-3M8 4.800v2M8 11.200v-2" stroke="#2a2a2a" stroke-width="1.300"/><path d="M5.800 6.600L7.600 8 5.800 9.400ZM10.200 6.600L8.400 8l1.800 1.400Z" fill="#2a2a2a"/></svg></div>
<div class="b" style="left:835px;top:76px"><svg viewBox="0 0 16 16"><circle cx="7" cy="7" r="3.800" fill="none" stroke="#eee" stroke-width="1.300"/><path d="M9.800 9.800l3.400 3.400" stroke="#eee" stroke-width="1.800"/><path d="M5 7h4" stroke="#eee" stroke-width="1"/></svg></div>
<div class="a" style="left:856px;top:81px;width:1px;height:9px;background:#555"></div>
<div class="b" style="left:861px;top:76px"><svg viewBox="0 0 16 16"><path d="M4.200 5A5 5 0 1 1 3 8.500" fill="none" stroke="#eee" stroke-width="1.300"/><path d="M2.500 3l.6 3.400 3.300-.8Z" fill="#eee"/><rect x="6" y="6.300" width="4.500" height="3.800" fill="#eee" transform="rotate(-15 8 8)"/></svg></div>
<div class="b dk" style="left:881px;top:76px"><svg viewBox="0 0 16 16"><rect x="5" y="5.500" width="6" height="5" fill="#f0f0f0"/><path d="M2.300 3l3.200 2.800M13.700 3l-3.200 2.800M2.300 13l3.200-2.800M13.700 13l-3.200-2.800" stroke="#eee" stroke-width="1.400"/></svg></div>
<div class="b" style="left:902px;top:76px"><svg viewBox="0 0 16 16"><path d="M11.800 5A5 5 0 1 0 13 8.500" fill="none" stroke="#eee" stroke-width="1.300"/><path d="M13.500 3l-.6 3.400-3.300-.8Z" fill="#eee"/><rect x="5.500" y="6.300" width="4.500" height="3.800" fill="#eee" transform="rotate(15 8 8)"/></svg></div>
<div class="a" style="left:923px;top:81px;width:1px;height:9px;background:#555"></div>
<div class="b" style="left:927px;top:76px"><svg viewBox="0 0 16 16"><path d="M3 6.500h4.500v6.500H3Z" fill="#eee"/><path d="M9 6.500h4v6.500H9Z" fill="none" stroke="#eee" stroke-width="1"/><path d="M5 5c.5-2.500 5-2.500 6 0" fill="none" stroke="#eee" stroke-width="1"/><path d="M11.800 3.500l-.6 2-1.900-.6" fill="none" stroke="#eee" stroke-width="1"/></svg></div>
<div class="a" style="left:766px;top:96px;width:258px;height:53px;background:#494949"></div>
<div class="a" style="left:872px;top:97px;width:52px;height:52px;background:#fff"></div>
<div class="a" style="left:888px;top:113px;width:22px;height:17px;border:2px solid #b81422"></div>
<div class="a" style="left:893px;top:120px;width:11px;height:2px;background:#3fd6a4;border-radius:1px;opacity:.6"></div>
<div class="a" style="left:766px;top:152px;width:258px;height:181px;background:#262626"></div>
<div class="hdr" style="left:766px;top:152px;width:258px;padding-right:20px">Lớp<svg class="a" style="left:239px;top:1px" width="22" height="10" viewBox="0 0 22 10"><path d="M5.500 2.500H1.500v6h6V5" stroke="#bbb" stroke-width="1" fill="none"/><path d="M5 5l3.500-3.500M6.500 1h2.500v2.500" stroke="#bbb" stroke-width="1" fill="none"/><path d="M13.500 2l6 6M19.500 2l-6 6" stroke="#ddd" stroke-width="1.700"/></svg></div>
<div class="lbl" style="left:770px;top:175px">Độ trong</div>
<div class="a" style="left:836px;top:173px;width:154px;height:12px;background:linear-gradient(to right,#7ec0f5,#4a96d8);border:1px solid #1a2a3a"></div>
<div class="lbl" style="left:995px;top:175px;font-size:9px;letter-spacing:0;color:#c8c8c8">100 %</div>
<div class="lbl" style="left:770px;top:193px">Pha trộn</div>
<div class="a" style="left:838px;top:190px;width:185px;height:16px;background:#484848;border-radius:2px"></div>
<div class="lbl" style="left:840px;top:193px;color:#aaa">Bình thường</div>
<svg class="a" style="left:1014px;top:195px" width="8" height="6" viewBox="0 0 8 6"><path d="M1 1h6L4 5Z" fill="#999"/></svg>
<div class="a" style="left:772px;top:214px;width:8px;height:8px;border:1px solid #444"></div><div class="lbl" style="left:785px;top:213px;color:#5c5c5c">Bảo vệ alpha</div>
<div class="a" style="left:859px;top:214px;width:8px;height:8px;border:1px solid #c8c8c8"></div><div class="lbl" style="left:871px;top:213px">Xén bớt</div>
<div class="a" style="left:945px;top:214px;width:8px;height:8px;border:1px solid #c8c8c8"></div><div class="lbl" style="left:957px;top:213px">Khóa</div>
<div class="a" style="left:766px;top:229px;width:246px;height:79px;background:#5a5a5a;overflow:hidden">
 <div class="a" style="left:16px;top:0;width:230px;height:30px;background:#4b9add"></div>
 <div class="a" style="left:0;top:30px;width:246px;height:1px;background:#3a3a3a"></div>
 <div class="a" style="left:0;top:60px;width:246px;height:1px;background:#3a3a3a"></div>
 <div class="a" style="left:0;top:0;width:16px;height:80px;background:#636363;opacity:.6"></div>
 <div class="a" style="left:5px;top:11px;width:7px;height:7px;border-radius:4px;background:#e4e4e4"></div>
 <div class="a" style="left:5px;top:41px;width:7px;height:7px;border-radius:4px;background:#e4e4e4"></div>
 <div class="a" style="left:5px;top:71px;width:7px;height:7px;border-radius:4px;background:#e4e4e4"></div>
 <div class="a" style="left:28px;top:10px;width:26px;height:10px;background:#f4f4f4"></div>
 <div class="a" style="left:29px;top:11px;width:20px;height:3px;background:#222;opacity:.75"></div><div class="a" style="left:29px;top:15px;width:11px;height:3px;background:#222;opacity:.6"></div>
 <div class="a chk" style="left:28px;top:32px;width:26px;height:26px;background-size:8px 8px;background-position:0 0,4px 4px;background-image:linear-gradient(45deg,#ececec 25%,transparent 25%,transparent 75%,#ececec 75%),linear-gradient(45deg,#ececec 25%,transparent 25%,transparent 75%,#ececec 75%)"></div>
 <div class="a chk" style="left:28px;top:63px;width:26px;height:20px;background-size:8px 8px;background-position:0 0,4px 4px;background-image:linear-gradient(45deg,#ececec 25%,transparent 25%,transparent 75%,#ececec 75%),linear-gradient(45deg,#ececec 25%,transparent 25%,transparent 75%,#ececec 75%)"></div>
 <div class="lbl" style="left:66px;top:10px;font-size:10.400px;font-weight:bold;color:#fff;letter-spacing:0">heoheo68548</div>
 <div class="lbl" style="left:66px;top:41px;font-size:9px;color:#ddd">Lớp1</div>
 <div class="lbl" style="left:66px;top:71px;font-size:9px;color:#ddd">Lớp2</div>
 <svg class="a" style="left:228px;top:8px" width="15" height="15" viewBox="0 0 11 11"><circle cx="5.500" cy="5.500" r="3" fill="none" stroke="#fff" stroke-width="1.600"/><path d="M5.500 .500v10M.500 5.500h10M2 2l7 7M9 2l-7 7" stroke="#fff" stroke-width="1.200"/><circle cx="5.500" cy="5.500" r="1.300" fill="#4b9add"/></svg>
</div>
<div class="a" style="left:1013px;top:228px;width:11px;height:80px;background:#323232"></div>
<svg class="a" style="left:1013px;top:228px" width="11" height="80" viewBox="0 0 11 80"><path d="M5.500 2l3.500 4.500H2Z" fill="#aaa"/><rect x=".5" y="9" width="10.500" height="52" rx="2" fill="#7a7a7a"/><path d="M5.500 77l3.500-4.500H2Z" fill="#aaa"/></svg>
<div class="a" style="left:766px;top:308px;width:258px;height:21px;background:#1d1d1d"></div>
<div class="b" style="left:770px;top:309px"><svg viewBox="0 0 16 16"><path d="M4 2.500h5.500l2.500 2.500v8.500h-8Z" fill="none" stroke="#ddd" stroke-width="1.100"/><path d="M9.500 2.500v2.500h2.500" fill="none" stroke="#ddd" stroke-width="1"/></svg></div>
<div class="b" style="left:791px;top:309px"><svg viewBox="0 0 16 16"><path d="M4 2.500h5.500l2.500 2.500v8.500h-8Z" fill="none" stroke="#ddd" stroke-width="1.100"/><path d="M9.500 2.500v2.500h2.500" fill="none" stroke="#ddd" stroke-width="1"/><text x="5.800" y="12" font-size="6.500" fill="#ddd" font-family="Liberation Sans" font-weight="bold">8</text></svg></div>
<div class="b" style="left:811px;top:309px"><svg viewBox="0 0 16 16"><path d="M4 2.500h5.500l2.500 2.500v8.500h-8Z" fill="none" stroke="#ddd" stroke-width="1.100"/><path d="M9.500 2.500v2.500h2.500" fill="none" stroke="#ddd" stroke-width="1"/><text x="6" y="12" font-size="6.500" fill="#ddd" font-family="Liberation Sans" font-weight="bold">1</text></svg></div>
<div class="b" style="left:832px;top:309px;width:23px"><svg viewBox="0 0 21 16" style="width:21px"><path d="M3 2.500h5l2.500 2.500v3M3 2.500v10.500h3.500" fill="none" stroke="#ddd" stroke-width="1.100"/><path d="M7.500 11.500h5M10 9v5" stroke="#eee" stroke-width="1.300"/><path d="M14 7h5l-2.500 3Z" fill="#eee"/></svg></div>
<div class="b" style="left:858px;top:309px"><svg viewBox="0 0 16 16"><path d="M2.500 4h4l1 1.500h6v7.500h-11Z" fill="#e8e8e8"/></svg></div>
<div class="a" style="left:878px;top:314px;width:1px;height:9px;background:#555"></div>
<div class="b" style="left:883px;top:309px"><svg viewBox="0 0 16 16"><rect x="3" y="5.500" width="7.500" height="7.500" fill="none" stroke="#ccc" stroke-width="1.100"/><path d="M5.500 5.500v-2.500h7.500v7.500h-2.500" fill="none" stroke="#ccc" stroke-width="1.100"/></svg></div>
<div class="b dk" style="left:904px;top:309px"><svg viewBox="0 0 16 16"><rect x="2.500" y="3" width="4" height="3.500" fill="none" stroke="#eee" stroke-width="1"/><rect x="2.500" y="9.500" width="4" height="3.500" fill="none" stroke="#eee" stroke-width="1"/><rect x="9.500" y="6" width="4.500" height="4" fill="#eee"/><path d="M6.500 4.800h1.500v6.500h-1.500M8 8h1.500" stroke="#eee" stroke-width="1" fill="none"/></svg></div>
<div class="a" style="left:925px;top:314px;width:1px;height:9px;background:#555"></div>
<div class="b" style="left:929px;top:309px"><svg viewBox="0 0 16 16"><path d="M4 5.500h8v8h-8Z" fill="none" stroke="#eee" stroke-width="1.200"/><path d="M3 4h10M6.300 3.800v-1.300h3.400v1.300" stroke="#eee" stroke-width="1.200" fill="none"/><path d="M6.500 7v5M9.500 7v5M8 7v5" stroke="#eee" stroke-width=".9"/></svg></div>
<div class="a" style="left:766px;top:335px;width:258px;height:48px;background:#262626"></div>
<div class="hdr" style="left:766px;top:335px;width:258px;padding-right:20px">Reference<svg class="a" style="left:239px;top:1px" width="22" height="10" viewBox="0 0 22 10"><path d="M5.500 2.500H1.500v6h6V5" stroke="#bbb" stroke-width="1" fill="none"/><path d="M5 5l3.500-3.500M6.500 1h2.500v2.500" stroke="#bbb" stroke-width="1" fill="none"/><path d="M13.500 2l6 6M19.500 2l-6 6" stroke="#ddd" stroke-width="1.700"/></svg></div>
<div class="a" style="left:766px;top:352px;width:258px;height:22px;background:#1d1d1d"></div>
<div class="b" style="left:770px;top:354px"><svg viewBox="0 0 16 16"><path d="M4 9.500h8a2.300 2.300 0 0 0 .3-4.600 3.200 3.200 0 0 0-6.100-.6A2.600 2.600 0 0 0 4 9.500Z" fill="#eee"/><path d="M8 7v6.500M5.800 11.300l2.200 2.400 2.200-2.400" stroke="#eee" stroke-width="1.400" fill="none"/></svg></div>
<div class="b" style="left:790px;top:354px"><svg viewBox="0 0 16 16"><path d="M2.500 4h4l1 1.500h5v2h-7l-3 5.500Z" fill="#ccc"/><path d="M5.500 8h9l-2.500 5h-9.500Z" fill="#e8e8e8"/></svg></div>
<div class="b dk" style="left:810px;top:354px"><svg viewBox="0 0 16 16"><path d="M4.500 4.500l7 7M11.500 4.500l-7 7" stroke="#eee" stroke-width="1.800"/></svg></div>
<div class="a" style="left:831px;top:359px;width:1px;height:9px;background:#555"></div>
<div class="b dk" style="left:835px;top:354px"><svg viewBox="0 0 16 16"><circle cx="7" cy="7" r="3.800" fill="none" stroke="#eee" stroke-width="1.300"/><path d="M9.800 9.800l3.400 3.400" stroke="#eee" stroke-width="1.800"/><path d="M5 7h4M7 5v4" stroke="#eee" stroke-width="1"/></svg></div>
<div class="b dk" style="left:856px;top:354px"><svg viewBox="0 0 16 16"><rect x="2.500" y="4" width="11" height="8" fill="#cfcfcf"/><path d="M3.500 8h3M12.500 8h-3M8 4.800v2M8 11.200v-2" stroke="#2a2a2a" stroke-width="1.300"/><path d="M5.800 6.600L7.600 8 5.800 9.400ZM10.200 6.600L8.400 8l1.800 1.400Z" fill="#2a2a2a"/></svg></div>
<div class="b dk" style="left:876px;top:354px"><svg viewBox="0 0 16 16"><circle cx="7" cy="7" r="3.800" fill="none" stroke="#eee" stroke-width="1.300"/><path d="M9.800 9.800l3.400 3.400" stroke="#eee" stroke-width="1.800"/><path d="M5 7h4" stroke="#eee" stroke-width="1"/></svg></div>
<div class="a" style="left:897px;top:359px;width:1px;height:9px;background:#555"></div>
<div class="b dk" style="left:902px;top:354px"><svg viewBox="0 0 16 16"><path d="M3 14l1-3 6-6 2 2-6 6Z" fill="none" stroke="#eee" stroke-width="1.200"/><path d="M9.500 3.500l3.500 3.500M11 5l2-2c.8-.8 2 .4 1.200 1.200l-2 2" stroke="#eee" stroke-width="1.500" fill="none"/></svg></div>
<div class="b bl" style="left:922px;top:354px"><svg viewBox="0 0 16 16"><path d="M5 15c-1-1.500-2.400-3.800-3-5.200-.3-.9.900-1.400 1.500-.6L5 11V4.500c0-1 1.300-1 1.300 0V8h.6V3.200c0-1 1.400-1 1.400 0V8h.6V3.800c0-1 1.400-1 1.400 0V8.400h.6V5.400c0-1 1.300-1 1.300 0v5.600c0 1.800-.5 3-1.100 4Z" fill="#eee" transform="scale(.95) translate(.5,0)"/></svg></div>
<div class="a" style="left:944px;top:359px;width:1px;height:9px;background:#555"></div>
<div class="b dk" style="left:948px;top:354px"><svg viewBox="0 0 16 16"><path d="M4.200 5A5 5 0 1 1 3 8.500" fill="none" stroke="#eee" stroke-width="1.300"/><path d="M2.500 3l.6 3.400 3.300-.8Z" fill="#eee"/><rect x="6" y="6.300" width="4.500" height="3.800" fill="#eee" transform="rotate(-15 8 8)"/></svg></div>
<div class="b dk" style="left:969px;top:354px"><svg viewBox="0 0 16 16"><rect x="5" y="5.500" width="6" height="5" fill="#f0f0f0"/><path d="M2.300 3l3.200 2.800M13.700 3l-3.200 2.800M2.300 13l3.200-2.800M13.700 13l-3.200-2.800" stroke="#eee" stroke-width="1.400"/></svg></div>
<div class="b dk" style="left:989px;top:354px"><svg viewBox="0 0 16 16"><path d="M11.800 5A5 5 0 1 0 13 8.500" fill="none" stroke="#eee" stroke-width="1.300"/><path d="M13.500 3l-.6 3.400-3.300-.8Z" fill="#eee"/><rect x="5.500" y="6.300" width="4.500" height="3.800" fill="#eee" transform="rotate(15 8 8)"/></svg></div>
<div class="a" style="left:1010px;top:359px;width:1px;height:9px;background:#555"></div>
<div class="b" style="left:1020px;top:354px"><svg viewBox="0 0 16 16"></svg></div>
<div class="a" style="left:766px;top:374px;width:258px;height:7px;background:#fff;border-top:2px solid #999"></div>
<div class="a" style="left:766px;top:385px;width:258px;height:149px;background:#262626"></div>
<div class="hdr" style="left:766px;top:385px;width:258px;padding-right:20px">Brush Size<svg class="a" style="left:239px;top:1px" width="22" height="10" viewBox="0 0 22 10"><path d="M5.500 2.500H1.500v6h6V5" stroke="#bbb" stroke-width="1" fill="none"/><path d="M5 5l3.500-3.500M6.500 1h2.500v2.500" stroke="#bbb" stroke-width="1" fill="none"/><path d="M13.500 2l6 6M19.500 2l-6 6" stroke="#ddd" stroke-width="1.700"/></svg></div>
<div class="a" style="left:766px;top:400px;width:247px;height:134px;background:linear-gradient(#4e4e4e 0,#4e4e4e 112px,#3a3a3a 134px)"></div>
<div class="a" style="left:766px;top:400px;width:241px;height:112px;background:#5a5a5a"></div>
<svg class="a" style="left:766px;top:400px" width="247" height="134" viewBox="766 400 247 134">
<path d="M796.7 400v112" stroke="#4c4c4c" stroke-width="1"/><path d="M826.7 400v112" stroke="#4c4c4c" stroke-width="1"/><path d="M856.8 400v112" stroke="#4c4c4c" stroke-width="1"/><path d="M886.9 400v112" stroke="#4c4c4c" stroke-width="1"/><path d="M917.0 400v112" stroke="#4c4c4c" stroke-width="1"/><path d="M947.0 400v112" stroke="#4c4c4c" stroke-width="1"/><path d="M977.1 400v112" stroke="#4c4c4c" stroke-width="1"/><path d="M766 438.2h241" stroke="#4c4c4c" stroke-width="1.200"/><path d="M766 475.6h241" stroke="#4c4c4c" stroke-width="1.200"/>
<circle cx="780.6" cy="415.3" r="0.40" fill="#aaa"/><text x="780.6" y="436.0" font-size="7.500" fill="#e0e0e0" text-anchor="middle" font-family="Liberation Sans">1</text><circle cx="810.9" cy="415.3" r="0.40" fill="#aaa"/><text x="810.9" y="436.0" font-size="7.500" fill="#e0e0e0" text-anchor="middle" font-family="Liberation Sans">1.5</text><circle cx="841.1" cy="415.3" r="0.60" fill="#ededed"/><text x="841.1" y="436.0" font-size="7.500" fill="#e0e0e0" text-anchor="middle" font-family="Liberation Sans">2</text><circle cx="871.4" cy="415.3" r="0.90" fill="#ededed"/><text x="871.4" y="436.0" font-size="7.500" fill="#e0e0e0" text-anchor="middle" font-family="Liberation Sans">3</text><circle cx="901.7" cy="415.3" r="1.50" fill="#ededed"/><text x="901.7" y="436.0" font-size="7.500" fill="#e0e0e0" text-anchor="middle" font-family="Liberation Sans">4</text><circle cx="932.0" cy="415.3" r="2.00" fill="#ededed"/><text x="932.0" y="436.0" font-size="7.500" fill="#e0e0e0" text-anchor="middle" font-family="Liberation Sans">5</text><circle cx="962.2" cy="415.3" r="2.75" fill="#ededed"/><text x="962.2" y="436.0" font-size="7.500" fill="#e0e0e0" text-anchor="middle" font-family="Liberation Sans">7</text><circle cx="992.5" cy="415.3" r="3.75" fill="#ededed"/><circle cx="992.5" cy="415.3" r="2.400" fill="#fff"/><text x="992.5" y="436.0" font-size="7.500" fill="#e0e0e0" text-anchor="middle" font-family="Liberation Sans">10</text>
<circle cx="780.6" cy="453.3" r="4.75" fill="#ededed"/><text x="780.6" y="473.4" font-size="7.500" fill="#e0e0e0" text-anchor="middle" font-family="Liberation Sans">12</text><circle cx="810.9" cy="453.3" r="5.75" fill="#ededed"/><text x="810.9" y="473.4" font-size="7.500" fill="#e0e0e0" text-anchor="middle" font-family="Liberation Sans">15</text><circle cx="841.1" cy="453.3" r="7.75" fill="#ededed"/><text x="841.1" y="473.4" font-size="7.500" fill="#e0e0e0" text-anchor="middle" font-family="Liberation Sans">20</text><circle cx="871.4" cy="453.3" r="9.25" fill="#ededed"/><text x="871.4" y="473.4" font-size="7.500" fill="#e0e0e0" text-anchor="middle" font-family="Liberation Sans">25</text><circle cx="901.7" cy="453.3" r="9.25" fill="#ededed"/><text x="901.7" y="473.4" font-size="7.500" fill="#e0e0e0" text-anchor="middle" font-family="Liberation Sans">30</text><circle cx="932.0" cy="453.3" r="9.25" fill="#ededed"/><text x="932.0" y="473.4" font-size="7.500" fill="#e0e0e0" text-anchor="middle" font-family="Liberation Sans">40</text><circle cx="962.2" cy="453.3" r="9.25" fill="#ededed"/><text x="962.2" y="473.4" font-size="7.500" fill="#e0e0e0" text-anchor="middle" font-family="Liberation Sans">50</text><circle cx="992.5" cy="453.3" r="9.25" fill="#ededed"/><text x="992.5" y="473.4" font-size="7.500" fill="#e0e0e0" text-anchor="middle" font-family="Liberation Sans">70</text>
<circle cx="780.6" cy="490.6" r="9.25" fill="#ededed"/><text x="780.6" y="511.4" font-size="7.500" fill="#e0e0e0" text-anchor="middle" font-family="Liberation Sans">100</text><circle cx="810.9" cy="490.6" r="9.25" fill="#ededed"/><text x="810.9" y="511.4" font-size="7.500" fill="#e0e0e0" text-anchor="middle" font-family="Liberation Sans">150</text><circle cx="841.1" cy="490.6" r="9.25" fill="#ededed"/><text x="841.1" y="511.4" font-size="7.500" fill="#e0e0e0" text-anchor="middle" font-family="Liberation Sans">200</text><circle cx="871.4" cy="490.6" r="9.25" fill="#ededed"/><text x="871.4" y="511.4" font-size="7.500" fill="#e0e0e0" text-anchor="middle" font-family="Liberation Sans">300</text><circle cx="901.7" cy="490.6" r="9.25" fill="#ededed"/><text x="901.7" y="511.4" font-size="7.500" fill="#e0e0e0" text-anchor="middle" font-family="Liberation Sans">400</text><circle cx="932.0" cy="490.6" r="9.25" fill="#ededed"/><text x="932.0" y="511.4" font-size="7.500" fill="#e0e0e0" text-anchor="middle" font-family="Liberation Sans">500</text><circle cx="962.2" cy="490.6" r="9.25" fill="#ededed"/><text x="962.2" y="511.4" font-size="7.500" fill="#e0e0e0" text-anchor="middle" font-family="Liberation Sans">700</text><circle cx="992.5" cy="490.6" r="9.25" fill="#ededed"/><text x="992.5" y="511.4" font-size="7.500" fill="#e0e0e0" text-anchor="middle" font-family="Liberation Sans">1000</text>
</svg>
<div class="a" style="left:1013px;top:400px;width:11px;height:134px;background:#323232"></div>
<svg class="a" style="left:1013px;top:400px" width="11" height="134" viewBox="0 0 11 134"><path d="M5.500 2l3.500 4.500H2Z" fill="#aaa"/><rect x=".5" y="10" width="10.500" height="115" rx="2" fill="#7a7a7a"/><path d="M5.500 132l3.500-4.500H2Z" fill="#aaa"/></svg>
<div class="a" style="left:0;top:534px;width:1024px;height:8px;background:#232223"></div>
<div class="lbl" style="left:2px;top:537px;font-size:8.500px;color:#aaa;letter-spacing:0">6800 * 6800 pixel&nbsp; (50 * 50cm)&nbsp; 350 dpi&nbsp; 26 %&nbsp; ( 2410, 2710 )</div>
</div>
</body>
</html>
